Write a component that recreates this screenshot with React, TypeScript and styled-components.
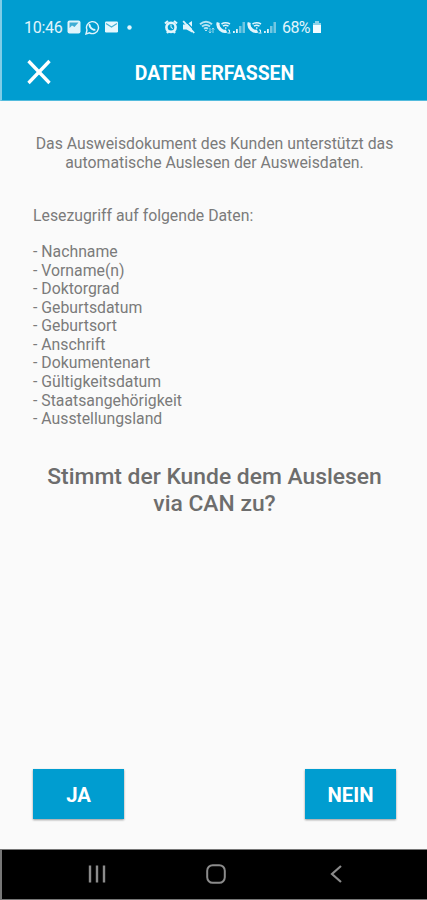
import React from "react";
import styled, { createGlobalStyle } from "styled-components";

const GlobalStyle = createGlobalStyle`
  *, *::before, *::after { box-sizing: border-box; }
  body { margin: 0; background: #fafafa; font-family: Roboto, "Liberation Sans", sans-serif; }
  p, h1, h2, ul { margin: 0; padding: 0; }
`;

const Screen = styled.div`
  width: 427px;
  height: 900px;
  display: flex;
  flex-direction: column;
  overflow: hidden;
  background: #fafafa;
  color: #7b7b7b;
`;

const Header = styled.header`
  height: 101px;
  flex: none;
  background: #009dd0;
  border-left: 2px solid #7fcde7;
  border-bottom: 1px solid #52bbdd;
  color: #fff;
`;

const StatusBar = styled.div`
  height: 44px;
  padding: 10px 0 0 22px;
  display: flex;
  align-items: center;
  color: #e2f5fc;
`;

const StatusText = styled.span<{ $width: number; $spacing?: number }>`
  width: ${(p) => p.$width}px;
  flex: none;
  padding-top: 1px;
  font-size: 16px;
  line-height: 18px;
  letter-spacing: ${(p) => p.$spacing ?? 0}px;
  white-space: nowrap;
`;

const StatusIcon = styled.svg<{ $gap: number }>`
  flex: none;
  display: block;
  margin-left: ${(p) => p.$gap}px;
`;

const TitleBar = styled.div`
  height: 56px;
  display: grid;
  grid-template-columns: 74px 1fr 74px;
  align-items: center;
`;

const CloseButton = styled.button`
  width: 26px;
  height: 26px;
  margin-left: 24px;
  padding: 0;
  border: 0;
  background: none;
  color: #fff;
  svg { display: block; }
`;

const Title = styled.h1`
  padding-top: 3px;
  font-size: 19.4px;
  line-height: 24px;
  font-weight: 700;
  text-align: center;
  white-space: nowrap;
`;

const Content = styled.main`
  flex: 1;
  display: flex;
  flex-direction: column;
  padding: 34.4px 31px 30px 33px;
`;

const Intro = styled.p`
  font-size: 15.8px;
  line-height: 18.6px;
  text-align: center;
  white-space: nowrap;
`;

const AccessLabel = styled.p`
  margin-top: 34px;
  font-size: 15.8px;
  line-height: 18.6px;
`;

const DataList = styled.ul`
  margin-top: 18px;
  list-style: none;
  font-size: 15.8px;
  line-height: 18.55px;
`;

const Question = styled.h2`
  margin-top: 34px;
  font-size: 22.85px;
  line-height: 27px;
  font-weight: 500;
  color: #6d6d6d;
  text-align: center;
  white-space: nowrap;
`;

const Actions = styled.div`
  margin-top: auto;
  display: flex;
  justify-content: space-between;
`;

const ActionButton = styled.button`
  width: 91px;
  height: 50px;
  padding: 1px 0 0;
  border: 0;
  background: #009dd0;
  box-shadow: 0 1px 2px rgba(0, 0, 0, 0.4);
  color: #fff;
  font: 700 20.3px/24px Roboto, "Liberation Sans", sans-serif;
`;

const NavigationBar = styled.nav`
  height: 51px;
  flex: none;
  display: grid;
  grid-template-columns: repeat(3, 119.5px);
  justify-content: center;
  align-items: center;
  padding: 0 0 2px 3px;
  border: 1px solid #777;
  border-width: 1px 0 1px 2px;
  background: #000;
  color: #8b8b8b;
  svg { display: block; margin: auto; }
`;

const entries = [
  "Nachname", "Vorname(n)", "Doktorgrad", "Geburtsdatum", "Geburtsort",
  "Anschrift", "Dokumentenart", "Gültigkeitsdatum", "Staatsangehörigkeit", "Ausstellungsland",
];

const PictureIcon = () => (
  <StatusIcon $gap={3} width="14" height="14" viewBox="0 0 14 14">
    <rect x=".5" y=".5" width="13" height="13" rx="2" fill="#dff4fb" />
    <path d="M2.500 8V2.500h9L7.500 7 5 5.500 2.500 8" fill="#3fadd4" />
  </StatusIcon>
);

const ChatIcon = () => (
  <StatusIcon $gap={4} width="15" height="15" viewBox="0 0 15 15" fill="none" stroke="currentColor">
    <path d="M1 14l1-4a6 6 0 1 1 2.5 2.8z" strokeWidth="1.4" />
    <path d="M5.1 4.2c-.8.8-.4 2.4 1 3.9s3.300 2.100 4.100 1.300" strokeWidth="2" />
  </StatusIcon>
);

const MailIcon = () => (
  <StatusIcon $gap={4} width="15" height="12" viewBox="0 0 15 12">
    <rect x="1" y=".5" width="13" height="11" rx="1.2" fill="#e5f7fd" />
    <path d="M2 2.500l5.500 3.500L13 2.500" fill="none" stroke="#46b2d6" strokeWidth="1.200" />
  </StatusIcon>
);

const AlarmIcon = () => (
  <StatusIcon $gap={32} width="14" height="14" viewBox="0 0 14 14" fill="none" stroke="currentColor">
    <circle cx="7" cy="7.300" r="4.600" strokeWidth="2.600" />
    <path d="M1 3.500L4 1M13 3.500L10 1M3 13l1.500-2M11 13l-1.500-2" strokeWidth="2.200" />
    <path d="M7 4.500v3l2 1" />
  </StatusIcon>
);

const MuteIcon = () => (
  <StatusIcon $gap={4} width="14" height="14" viewBox="0 0 14 14">
    <path d="M1 4.500h3.500L10 1v11.500L4.500 9.500H1z" fill="currentColor" />
    <path d="M3.500 1l9.500 10" stroke="#009dd0" strokeWidth="1.200" />
    <path d="M1.200 1.200l11 11.800" stroke="currentColor" strokeWidth="1.800" />
  </StatusIcon>
);

const WifiIcon = () => (
  <StatusIcon $gap={3} width="16" height="14" viewBox="0 0 16 14" fill="none" stroke="#b7e4f3">
    <path d="M1 4.300Q7 -.8 13 4.300M3 6.500q4-3 8 0M5 8.700q2-1.500 4 0" strokeWidth="2" />
    <path d="M7 10v1" strokeWidth="2" />
    <path d="M11 8v5m-1.300-1.500L11 13l1.300-1.500M14 13V8m-1.300 1.500L14 8l1.300 1.500" strokeWidth=".8" />
  </StatusIcon>
);

const CallIcon = ({ gap }: { gap: number }) => (
  <StatusIcon $gap={gap} width="16" height="13" viewBox="0 0 16 13" fill="none" stroke="currentColor">
    <path d="M2.300 1.500C1.500 3.500 2.500 6.500 4.500 8.500c2 1.800 4.500 2.300 6 1.500" strokeWidth="3.200" />
    <path d="M5.500 3q4-2.500 8.500 0M7 5.200q2.500-2 5.500 0M9 7h1.500" strokeWidth="1.600" />
    <path d="M12 9h1.500v2.500M11.500 12h3" strokeWidth="1" />
  </StatusIcon>
);

const SignalIcon = () => (
  <StatusIcon $gap={0} width="14" height="13" viewBox="0 0 14 13">
    <path d="M1 10h1.800v2H1zM4 8h1.800v4H4z" fill="#dff4fb" />
    <path d="M7 5h2.500v7H7zM10.500 1H13v11h-2.500z" fill="#72c7e2" />
  </StatusIcon>
);

const BatteryIcon = () => (
  <StatusIcon $gap={0} width="10" height="14" viewBox="0 0 10 14">
    <path d="M3 1h4v2h2v10H1V3h2z" fill="#8bd2e9" />
    <path d="M1 5h8v8H1z" fill="#f2fbff" />
  </StatusIcon>
);

export default function App() {
  return (
    <Screen>
      <GlobalStyle />
      <Header>
        <StatusBar>
          <StatusText $width={40} $spacing={-0.3}>10:46</StatusText>
          <PictureIcon />
          <ChatIcon />
          <MailIcon />
          <StatusIcon $gap={8} width="5" height="5" viewBox="0 0 5 5"><circle cx="2.500" cy="2.500" r="2.200" fill="currentColor" /></StatusIcon>
          <AlarmIcon />
          <MuteIcon />
          <WifiIcon />
          <CallIcon gap={1} />
          <SignalIcon />
          <CallIcon gap={1} />
          <SignalIcon />
          <StatusIcon $gap={4} width="1" height="1" />
          <StatusText $width={30} $spacing={-0.6}>68%</StatusText>
          <BatteryIcon />
        </StatusBar>
        <TitleBar>
          <CloseButton aria-label="Schließen">
            <svg width="26" height="26" viewBox="0 0 26 26"><path d="M2.500 2L23.500 24M23.500 2L2.500 24" stroke="currentColor" strokeWidth="3.300" /></svg>
          </CloseButton>
          <Title>DATEN ERFASSEN</Title>
        </TitleBar>
      </Header>
      <Content>
        <Intro>Das Ausweisdokument des Kunden unterstützt das<br />automatische Auslesen der Ausweisdaten.</Intro>
        <AccessLabel>Lesezugriff auf folgende Daten:</AccessLabel>
        <DataList>{entries.map((entry) => <li key={entry}>- {entry}</li>)}</DataList>
        <Question>Stimmt der Kunde dem Auslesen<br />via CAN zu?</Question>
        <Actions>
          <ActionButton>JA</ActionButton>
          <ActionButton>NEIN</ActionButton>
        </Actions>
      </Content>
      <NavigationBar>
        <svg width="18" height="18" viewBox="0 0 18 18"><path d="M2 .5v17M9 .5v17M16 .5v17" stroke="currentColor" strokeWidth="2.400" /></svg>
        <svg width="20" height="20" viewBox="0 0 20 20"><rect x="1.200" y="1.200" width="17.600" height="17.600" rx="5.500" fill="none" stroke="currentColor" strokeWidth="2" /></svg>
        <svg width="12" height="18" viewBox="0 0 12 18"><path d="M11 1L2 9l9 8" fill="none" stroke="currentColor" strokeWidth="2.200" /></svg>
      </NavigationBar>
    </Screen>
  );
}
